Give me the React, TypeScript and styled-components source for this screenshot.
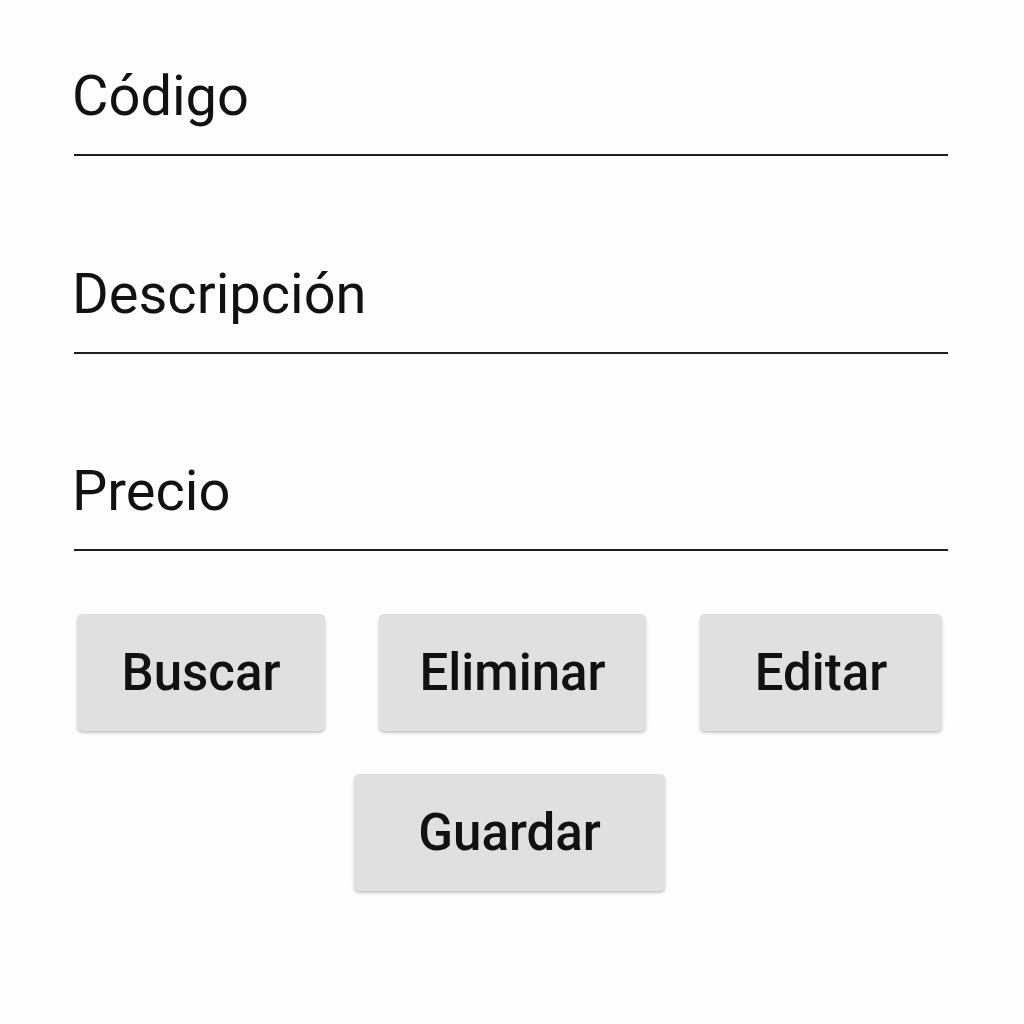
import React from 'react';
import styled, { createGlobalStyle } from 'styled-components';

const GlobalStyle = createGlobalStyle`
  body {
    margin: 0;
    background-color: #fdfdfd;
    font-family: Roboto, "Liberation Sans", sans-serif;
  }
`;

const fields = ['Código', 'Descripción', 'Precio'];

const App = () => {
  return (
    <Container>
      <GlobalStyle />
      <Form>
        {fields.map((label) => (
          <Field key={label}>
            <Label>{label}</Label>
          </Field>
        ))}
      </Form>
      <ButtonRow>
        <ActionButton width={248}>Buscar</ActionButton>
        <ActionButton width={267}>Eliminar</ActionButton>
        <ActionButton width={242}>Editar</ActionButton>
      </ButtonRow>
      <ButtonRow center>
        <ActionButton width={311}>Guardar</ActionButton>
      </ButtonRow>
    </Container>
  );
};
export default App;

const Container = styled.div`
  width: 874px;
  padding: 63px 0 80px 74px;
  display: flex;
  flex-direction: column;
`;
const Form = styled.div`
  display: flex;
  flex-direction: column;
  gap: 104.5px;
`;
const Field = styled.div`
  display: flex;
  align-items: flex-end;
  padding-bottom: 25px;
  border-bottom: 2px solid #1e1e1e;
`;
const Label = styled.span`
  font-size: 56px;
  line-height: 66px;
  color: #111;
  margin-left: -2px;
`;
const ButtonRow = styled.div<{ center?: boolean }>`
  display: flex;
  justify-content: ${(p) => (p.center ? 'center' : 'space-between')};
  padding: 0 6px 0 3px;
  margin-top: ${(p) => (p.center ? '43px' : '63px')};
`;
const ActionButton = styled.button<{ width: number }>`
  width: ${(p) => p.width}px;
  height: 117px;
  border: none;
  border-radius: 5px;
  background-color: #e0e0e0;
  box-shadow: 0 2px 3px rgba(0, 0, 0, 0.22);
  font-family: Roboto, "Liberation Sans", sans-serif;
  font-size: 51px;
  font-weight: 500;
  color: #111;
  padding: 0;
`;
